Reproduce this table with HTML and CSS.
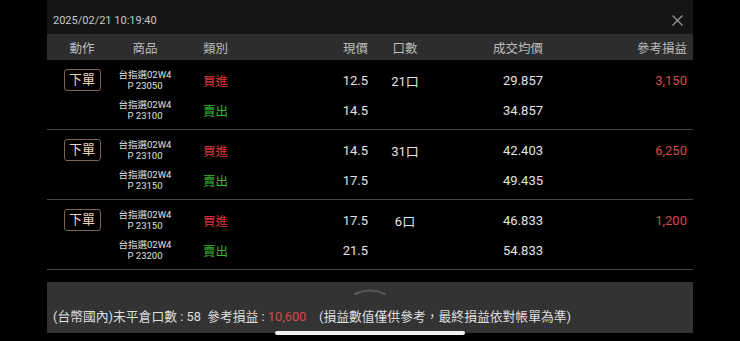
FILE: index.html
```html
<!DOCTYPE html>
<html lang="zh-Hant">
<head>
<meta charset="utf-8">
<title>未平倉</title>
<link rel="stylesheet" href="styles.css">
</head>
<body>
<div class="panel">
  <div class="topbar">
    <span class="date">2025/02/21 10:19:40</span>
    <svg class="close" width="11" height="11" viewBox="0 0 11 11"><path d="M0.5 0.5 L10.5 10.5 M10.5 0.5 L0.5 10.5" stroke="#9a9a9a" stroke-width="1.3" fill="none"/></svg>
  </div>
  <div class="grid head">
    <div class="c1">動作</div>
    <div class="c2">商品</div>
    <div class="c3">類別</div>
    <div class="c4">現價</div>
    <div class="c5">口數</div>
    <div class="c6">成交均價</div>
    <div class="c7">參考損益</div>
  </div>

  <div class="grid group">
    <div class="c1 act"><span class="btn">下單</span></div>
    <div class="c2 prod">台指選02W4<br>P 23050</div>
    <div class="c3 buy">買進</div>
    <div class="c4">12.5</div>
    <div class="c5">21口</div>
    <div class="c6">29.857</div>
    <div class="c7 red">3,150</div>
    <div class="c2 prod">台指選02W4<br>P 23100</div>
    <div class="c3 sell">賣出</div>
    <div class="c4">14.5</div>
    <div class="c5"></div>
    <div class="c6">34.857</div>
    <div class="c7"></div>
  </div>

  <div class="grid group">
    <div class="c1 act"><span class="btn">下單</span></div>
    <div class="c2 prod">台指選02W4<br>P 23100</div>
    <div class="c3 buy">買進</div>
    <div class="c4">14.5</div>
    <div class="c5">31口</div>
    <div class="c6">42.403</div>
    <div class="c7 red">6,250</div>
    <div class="c2 prod">台指選02W4<br>P 23150</div>
    <div class="c3 sell">賣出</div>
    <div class="c4">17.5</div>
    <div class="c5"></div>
    <div class="c6">49.435</div>
    <div class="c7"></div>
  </div>

  <div class="grid group">
    <div class="c1 act"><span class="btn">下單</span></div>
    <div class="c2 prod">台指選02W4<br>P 23150</div>
    <div class="c3 buy">買進</div>
    <div class="c4">17.5</div>
    <div class="c5">6口</div>
    <div class="c6">46.833</div>
    <div class="c7 red">1,200</div>
    <div class="c2 prod">台指選02W4<br>P 23200</div>
    <div class="c3 sell">賣出</div>
    <div class="c4">21.5</div>
    <div class="c5"></div>
    <div class="c6">54.833</div>
    <div class="c7"></div>
  </div>
</div>

<div class="footer">
  <svg class="handle" width="32" height="7" viewBox="0 0 32 7"><path d="M1 6 Q16 -1 31 6" stroke="#5a5a5a" stroke-width="2.2" fill="none" stroke-linecap="round"/></svg>
  <div class="summary">(台幣國內)未平倉口數 : 58&nbsp; 參考損益 : <span class="red">10,600</span>&nbsp;&nbsp;&nbsp; (損益數值僅供參考，最終損益依對帳單為準)</div>
</div>

<div class="homebar"></div>
</body>
</html>
```

FILE: styles.css
```css
html, body {
  margin: 0;
  padding: 0;
  background: #000;
}
body {
  width: 740px;
  height: 341px;
  overflow: hidden;
  position: relative;
  font-family: Roboto, "Noto Sans CJK TC", sans-serif;
  color: #e4e4e4;
}
.panel {
  margin-left: 47px;
  width: 646px;
  background: #000;
}
.topbar {
  height: 34px;
  box-sizing: border-box;
  padding: 6px 10px 0 6px;
  background: #141414;
  display: flex;
  align-items: center;
  justify-content: space-between;
}
.date {
  font-size: 11px;
  color: #c8c8c8;
}
.close {
  display: block;
}
.grid {
  display: grid;
  grid-template-columns: 70px 56px 140px 55px 74px 101px 144px;
  padding-right: 6px;
}
.head {
  height: 26px;
  background: #2d2d2d;
  align-items: center;
  font-size: 12.5px;
  color: #bcbcbc;
}
.group {
  grid-template-rows: 30px 30px;
  padding: 5px 6px 4px 0;
  border-bottom: 1px solid #474747;
  align-items: center;
  font-size: 13px;
}
.c1, .c2 { text-align: center; }
.c3 { padding-left: 30px; }
.c4, .c6, .c7 { text-align: right; }
.c5 { text-align: center; }
.act {
  grid-row: 1;
  display: flex;
  justify-content: center;
}
.btn {
  display: inline-block;
  width: 37px;
  height: 22px;
  box-sizing: border-box;
  border: 1px solid #7e6550;
  border-radius: 3px;
  color: #e6d3b6;
  font-size: 13px;
  line-height: 20px;
  text-align: center;
}
.group > .c2:nth-of-type(8) { grid-column: 2; }
.prod {
  font-size: 9.5px;
  line-height: 11px;
  color: #e0e0e0;
}
.buy, .sell { font-size: 12.5px; }
.buy { color: #dc383c; }
.sell { color: #33b833; }
.red { color: #d64949; }
.footer {
  margin: 12px 0 0 47px;
  width: 646px;
  height: 51px;
  background: #333;
  display: flex;
  flex-direction: column;
  box-sizing: border-box;
  padding: 6px 0 0 6px;
}
.handle {
  display: block;
  align-self: center;
  margin-left: -6px;
}
.summary {
  margin-top: 14px;
  font-size: 12.8px;
  line-height: 16px;
  color: #dedede;
  white-space: nowrap;
}
.homebar {
  position: absolute;
  left: 275px;
  top: 331px;
  width: 190px;
  height: 4px;
  border-radius: 2px;
  background: #f2f2f2;
}
```
